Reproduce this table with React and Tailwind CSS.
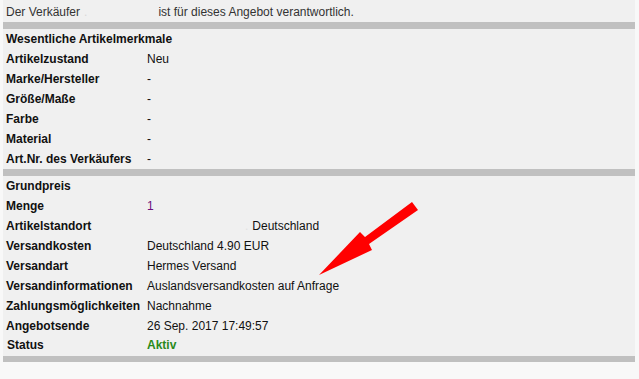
const features = [
  ["Artikelzustand", "Neu"],
  ["Marke/Hersteller", "-"],
  ["Größe/Maße", "-"],
  ["Farbe", "-"],
  ["Material", "-"],
  ["Art.Nr. des Verkäufers", "-"],
];

function Row({ label, children }) {
  return (
    <div className="flex h-[20px] items-center">
      <div className="w-[141px] shrink-0 font-bold">{label}</div>
      <div>{children}</div>
    </div>
  );
}

function Bar({ h = "h-[7px]" }) {
  return <div className={`${h} bg-[#c0c0c0]`} />;
}

export default function App() {
  return (
    <div
      className="relative h-[379px] w-[639px] overflow-hidden bg-[#f8f8f8] text-[12px] text-[#111]"
      style={{ fontFamily: '"Liberation Sans", Arial, sans-serif' }}
    >
      <div className="ml-[3px] w-[632px] bg-[#f0f0f0]">
        <div className="flex h-[22px] items-center pl-[3px] pt-[2px] text-[#333]">
          <span>Der Verkäufer</span>
          <span className="ml-[4px] text-[#d8d8d8]">.</span>
          <span className="ml-[71px]">ist für dieses Angebot verantwortlich.</span>
        </div>
        <Bar />
        <div className="px-[3px]">
          <div className="flex h-[20px] items-center font-bold">
            Wesentliche Artikelmerkmale
          </div>
          {features.map(([label, value]) => (
            <Row key={label} label={label}>
              {value}
            </Row>
          ))}
        </div>
        <Bar />
        <div className="px-[3px]">
          <div className="flex h-[20px] items-center font-bold">Grundpreis</div>
          <Row label="Menge">
            <span className="text-[#6b0f7d]">1</span>
          </Row>
          <Row label="Artikelstandort">
            <span className="ml-[98px] text-[#e2e2e2]">.</span>
            <span className="ml-[4px]">Deutschland</span>
          </Row>
          <Row label="Versandkosten">Deutschland 4.90 EUR</Row>
          <Row label="Versandart">Hermes Versand</Row>
          <Row label="Versandinformationen">Auslandsversandkosten auf Anfrage</Row>
          <Row label="Zahlungsmöglichkeiten">Nachnahme</Row>
          <Row label="Angebotsende">26 Sep. 2017 17:49:57</Row>
          <div className="flex h-[20px] items-center pb-[2px]">
            <div className="w-[141px] shrink-0 pl-[1px] font-bold">Status</div>
            <div className="font-bold text-[#2a8a1a]">Aktiv</div>
          </div>
        </div>
        <Bar h="h-[6px]" />
      </div>

      {/* red pointer arrow */}
      <svg
        className="pointer-events-none absolute left-0 top-0"
        width="639"
        height="379"
        viewBox="0 0 639 379"
      >
        <polygon
          points="412,202 418,210 369,244 372,250 319,275 360,232 365,237"
          fill="#ff0000"
        />
      </svg>
    </div>
  );
}
